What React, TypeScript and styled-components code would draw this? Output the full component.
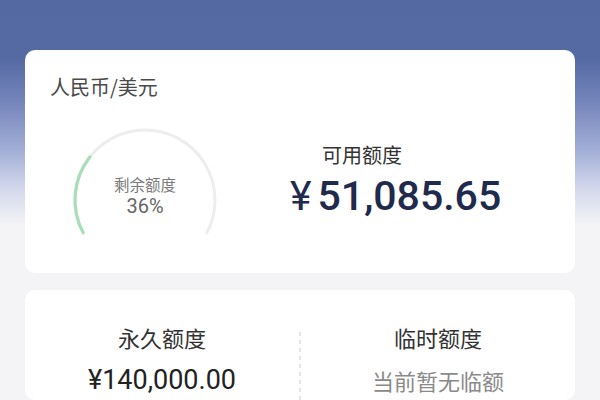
import React from "react";
import styled, { createGlobalStyle } from "styled-components";

const GlobalStyle = createGlobalStyle`
  html, body { margin: 0; padding: 0; }
  body {
    width: 600px;
    height: 400px;
    overflow: hidden;
    font-family: "Noto Sans CJK SC", "Noto Sans", sans-serif;
    background: #f4f4f6;
  }
`;

const Page = styled.div`
  box-sizing: border-box;
  width: 600px;
  height: 400px;
  padding: 50px 25px 0;
  display: flex;
  flex-direction: column;
  gap: 17px;
  overflow: hidden;
  background: linear-gradient(
    to bottom,
    #5468a2 0px,
    #5569a3 58px,
    #7384ba 100px,
    #a2aed6 150px,
    #d4d9ec 190px,
    #f4f4f6 225px,
    #f4f4f6 100%
  );
`;

const Card = styled.div<{ $h?: number }>`
  box-sizing: border-box;
  background: #ffffff;
  border-radius: 10px;
  flex-shrink: 0;
  ${(p) => (p.$h ? `height: ${p.$h}px;` : "flex: 1;")}
`;

const SummaryCard = styled(Card)`
  padding: 25px 25px 0;
  display: flex;
  flex-direction: column;
`;

const Title = styled.div`
  font-size: 20px;
  line-height: 24px;
  color: #4a4a4a;
`;

const Row = styled.div`
  display: flex;
  align-items: flex-start;
  margin-top: 27px;
  margin-left: 20px;
`;

const Gauge = styled.div`
  position: relative;
  width: 150px;
  height: 112px;
  flex-shrink: 0;
`;

const GaugeText = styled.div`
  position: absolute;
  left: 0;
  right: 0;
  top: 47px;
  display: flex;
  flex-direction: column;
  align-items: center;
`;

const GaugeLabel = styled.div`
  font-size: 15.5px;
  line-height: 22px;
  color: #7a7a7a;
`;

const GaugePct = styled.div`
  font-family: "Roboto", "Noto Sans", sans-serif;
  font-size: 20px;
  line-height: 22px;
  color: #666;
`;

const Info = styled.div`
  margin-left: 70px;
  margin-top: 15px;
  display: flex;
  flex-direction: column;
`;

const InfoLabel = styled.div`
  margin-left: 32px;
  font-size: 20px;
  line-height: 28px;
  color: #333;
`;

const Amount = styled.div`
  margin-top: 3px;
  font-family: "Roboto", "Noto Sans", sans-serif;
  font-size: 41px;
  font-weight: 500;
  line-height: 48px;
  color: #1f2a4d;
  white-space: nowrap;
`;

const Yen = styled.span`
  margin-right: 6px;
  font-weight: 400;
`;

const QuotaCard = styled(Card)`
  padding-top: 33px;
  display: grid;
  grid-template-columns: 1fr 2px 1fr;
`;

const Col = styled.div`
  display: flex;
  flex-direction: column;
  align-items: center;
`;

const ColLabel = styled.div`
  font-size: 22px;
  line-height: 28px;
  color: #333;
`;

const ColValue = styled.div<{ $muted?: boolean }>`
  margin-top: 11px;
  font-family: ${(p) =>
    p.$muted
      ? `"Noto Sans CJK SC", "Noto Sans", sans-serif`
      : `"Roboto", "Noto Sans", sans-serif`};
  font-size: ${(p) => (p.$muted ? "22px" : "27px")};
  line-height: 36px;
  color: ${(p) => (p.$muted ? "#8a8a8a" : "#222")};
  white-space: nowrap;
`;

const Divider = styled.div`
  margin-top: 9px;
  width: 2px;
  background: repeating-linear-gradient(
    to bottom,
    #e4e4e4 0px,
    #e4e4e4 4px,
    transparent 4px,
    transparent 8px
  );
`;

function arcPath(cx: number, cy: number, r: number, a0: number, a1: number) {
  const rad = (d: number) => (d * Math.PI) / 180;
  const x0 = cx + r * Math.cos(rad(a0));
  const y0 = cy + r * Math.sin(rad(a0));
  const x1 = cx + r * Math.cos(rad(a1));
  const y1 = cy + r * Math.sin(rad(a1));
  const large = a1 - a0 > 180 ? 1 : 0;
  return `M ${x0} ${y0} A ${r} ${r} 0 ${large} 1 ${x1} ${y1}`;
}

const GaugeArc: React.FC<{ percent: number }> = ({ percent }) => {
  const cx = 75;
  const cy = 74;
  const r = 70;
  const start = 152;
  const end = 388;
  const fillEnd = start + 66 * (percent / 36);
  return (
    <svg width="150" height="112" viewBox="0 0 150 112" style={{ display: "block" }}>
      <path d={arcPath(cx, cy, r, start, end)} fill="none" stroke="#ededed" strokeWidth="3" strokeLinecap="round" />
      <path d={arcPath(cx, cy, r, start, fillEnd)} fill="none" stroke="#a9dfb8" strokeWidth="3.2" strokeLinecap="round" />
    </svg>
  );
};

export default function App() {
  return (
    <>
      <GlobalStyle />
      <Page>
        <SummaryCard $h={223}>
          <Title>人民币/美元</Title>
          <Row>
            <Gauge>
              <GaugeArc percent={36} />
              <GaugeText>
                <GaugeLabel>剩余额度</GaugeLabel>
                <GaugePct>36%</GaugePct>
              </GaugeText>
            </Gauge>
            <Info>
              <InfoLabel>可用额度</InfoLabel>
              <Amount>
                <Yen>¥</Yen>51,085.65
              </Amount>
            </Info>
          </Row>
        </SummaryCard>
        <QuotaCard>
          <Col>
            <ColLabel>永久额度</ColLabel>
            <ColValue>¥140,000.00</ColValue>
          </Col>
          <Divider />
          <Col>
            <ColLabel>临时额度</ColLabel>
            <ColValue $muted>当前暂无临额</ColValue>
          </Col>
        </QuotaCard>
      </Page>
    </>
  );
}
